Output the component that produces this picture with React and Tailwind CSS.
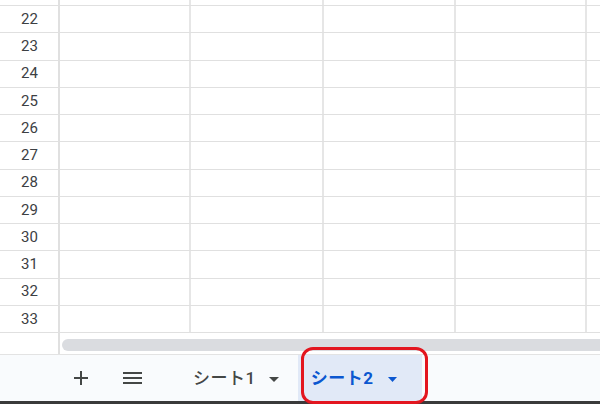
import React from "react";

const rows = [22, 23, 24, 25, 26, 27, 28, 29, 30, 31, 32, 33];

function Row({ n, h = "h-[27.25px]" }) {
  return (
    <div className={`flex ${h} border-b border-[#e0e0e0] shrink-0`}>
      <div className="w-[60px] shrink-0 border-r-2 border-[#e0e0e0] flex items-center justify-center text-[15px] text-[#3c4043] pl-[1px]" style={{ fontFamily: "Roboto, Arial, sans-serif" }}>
        {n}
      </div>
      <div className="w-[131px] shrink-0 border-r-2 border-[#e6e6e6]" />
      <div className="w-[133px] shrink-0 border-r-2 border-[#e6e6e6]" />
      <div className="w-[132px] shrink-0 border-r-2 border-[#e6e6e6]" />
      <div className="w-[131px] shrink-0 border-r-2 border-[#e6e6e6]" />
      <div className="flex-1" />
    </div>
  );
}

function Caret({ color, w = 10 }) {
  return (
    <svg width={w} height="5" viewBox={`0 0 ${w} 5`}>
      <polygon points={`0,0 ${w},0 ${w / 2},5`} fill={color} />
    </svg>
  );
}

export default function App() {
  return (
    <div className="relative w-[600px] h-[404px] overflow-hidden bg-white flex flex-col" style={{ fontFamily: "Roboto, 'Noto Sans CJK JP', sans-serif" }}>
      <div className="flex flex-col shrink-0">
        <Row n="" h="h-[6px]" />
        {rows.map((r) => (
          <Row key={r} n={r} />
        ))}
      </div>
      <div className="flex h-[21px] shrink-0 bg-white">
        <div className="w-[60px] shrink-0 border-r-2 border-[#e0e0e0]" />
        <div className="flex-1 pl-[2px] pt-[6px] pb-[1px]">
          <div className="h-[12px] rounded-l-full bg-[#dadce0]" />
        </div>
      </div>
      <div className="flex-1 flex items-stretch bg-[#f9fbfd] border-t border-[#e3e3e3]">
        <div className="ml-[74px] flex items-center">
          <svg width="14" height="14" viewBox="0 0 14 14">
            <path d="M7 0v14M0 7h14" stroke="#444746" strokeWidth="2" />
          </svg>
        </div>
        <div className="ml-[35px] flex items-center">
          <svg width="19" height="12" viewBox="0 0 19 12">
            <path d="M0 1h19M0 6h19M0 11h19" stroke="#444746" strokeWidth="2" />
          </svg>
        </div>
        <div className="ml-[51px] flex items-center text-[17px] font-medium text-[#444746] tracking-[0.5px] pt-[2px]">
          <span>シート1</span>
          <span className="ml-[13px] flex"><Caret color="#444746" /></span>
        </div>
        <div className="ml-[19px] w-[124px] bg-[#e1e9f7] flex items-center pl-[13px] text-[17px] font-bold text-[#0b57d0] tracking-[0.5px] pt-[2px]">
          <span>シート2</span>
          <span className="ml-[15px] flex"><Caret color="#0b57d0" w={9} /></span>
        </div>
      </div>
      <div className="h-[3px] bg-[#3a3a3a] shrink-0" />
      <div className="absolute left-[301px] top-[347px] w-[127px] h-[57px] rounded-[12px] border-[3.5px] border-[#e3161f]" />
    </div>
  );
}
